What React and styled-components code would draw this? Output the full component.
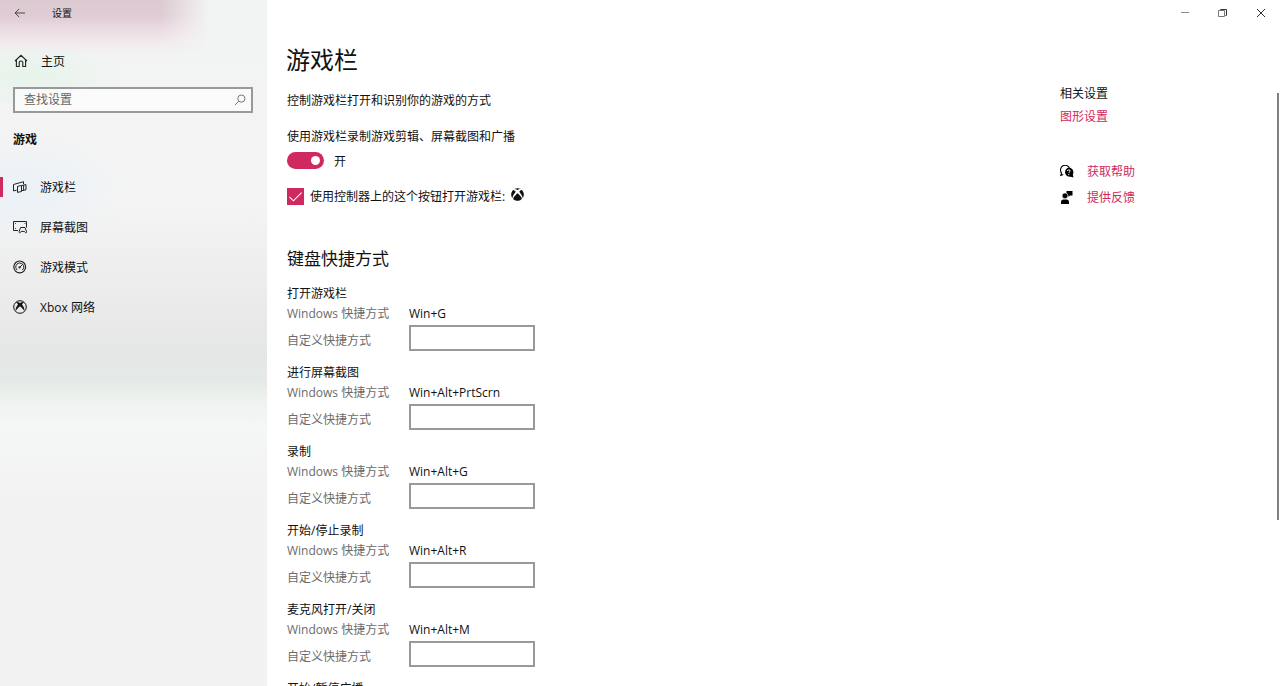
import { useState } from "react";
import styled, { createGlobalStyle } from "styled-components";
import { FaXbox } from "react-icons/fa";

const navItems = [
  { id: "bar", label: "游戏栏", Icon: GameBarIcon },
  { id: "capture", label: "屏幕截图", Icon: CaptureIcon },
  { id: "mode", label: "游戏模式", Icon: GameModeIcon },
  { id: "xbox", label: "Xbox 网络", Icon: XboxNetworkIcon },
];

const shortcuts = [
  { id: "open", title: "打开游戏栏", keys: "Win+G" },
  { id: "screenshot", title: "进行屏幕截图", keys: "Win+Alt+PrtScrn" },
  { id: "record", title: "录制", keys: "Win+Alt+G" },
  { id: "toggle-record", title: "开始/停止录制", keys: "Win+Alt+R" },
  { id: "mic", title: "麦克风打开/关闭", keys: "Win+Alt+M" },
  { id: "broadcast", title: "开始/暂停广播", keys: "Win+Alt+B" },
];

const App = () => {
  const [active, setActive] = useState("bar");
  const [recording, setRecording] = useState(true);
  const [controller, setController] = useState(true);

  return (
    <>
      <GlobalStyle />
      <Window>
        <Sidebar>
          <AppBar>
            <BackButton type="button" aria-label="返回">
              <BackIcon />
            </BackButton>
            <span>设置</span>
          </AppBar>
          <HomeLink href="#home">
            <HomeIcon />
            <IconLabel>主页</IconLabel>
          </HomeLink>
          <SearchBox>
            <input type="search" placeholder="查找设置" aria-label="查找设置" />
            <SearchIcon />
          </SearchBox>
          <Category>游戏</Category>
          <nav>
            {navItems.map(({ id, label, Icon }) => (
              <NavItem
                key={id}
                href={"#" + id}
                $active={active === id}
                onClick={() => setActive(id)}
              >
                <Icon />
                <IconLabel>{label}</IconLabel>
              </NavItem>
            ))}
          </nav>
        </Sidebar>

        <Main>
          <Controls>
            <ControlButton type="button" aria-label="最小化">
              <MinimizeIcon />
            </ControlButton>
            <ControlButton type="button" aria-label="还原">
              <RestoreIcon />
            </ControlButton>
            <ControlButton type="button" aria-label="关闭">
              <CloseIcon />
            </ControlButton>
          </Controls>
          <Title>游戏栏</Title>

          <Body>
            <Settings>
              <Text>控制游戏栏打开和识别你的游戏的方式</Text>
              <SwitchLabel htmlFor="recording">
                使用游戏栏录制游戏剪辑、屏幕截图和广播
              </SwitchLabel>
              <SwitchRow>
                <Switch
                  id="recording"
                  type="checkbox"
                  role="switch"
                  checked={recording}
                  onChange={(e) => setRecording(e.target.checked)}
                />
                <IconLabel>{recording ? "开" : "关"}</IconLabel>
              </SwitchRow>
              <CheckRow>
                <CheckBox>
                  <input
                    type="checkbox"
                    checked={controller}
                    onChange={(e) => setController(e.target.checked)}
                  />
                  {controller && <CheckIcon />}
                </CheckBox>
                <span>使用控制器上的这个按钮打开游戏栏:</span>
                <ControllerGlyph size={13} />
              </CheckRow>

              <SectionTitle>键盘快捷方式</SectionTitle>
              <ShortcutList>
                {shortcuts.map(({ id, title, keys }) => (
                  <Shortcut key={id}>
                    <h3>{title}</h3>
                    <ShortcutRow>
                      <span>Windows 快捷方式</span>
                      <kbd>{keys}</kbd>
                    </ShortcutRow>
                    <ShortcutRow>
                      <label htmlFor={id}>自定义快捷方式</label>
                      <input id={id} type="text" />
                    </ShortcutRow>
                  </Shortcut>
                ))}
              </ShortcutList>
            </Settings>

            <Related>
              <Text as="h2">相关设置</Text>
              <Link href="#graphics">图形设置</Link>
              <Support>
                <HelpRow>
                  <HelpIcon />
                  <Link href="#help">获取帮助</Link>
                </HelpRow>
                <HelpRow>
                  <FeedbackIcon />
                  <Link href="#feedback">提供反馈</Link>
                </HelpRow>
              </Support>
            </Related>

            <ScrollTrack>
              <ScrollThumb />
            </ScrollTrack>
          </Body>
        </Main>
      </Window>
    </>
  );
};

export default App;

function BackIcon() {
  return (
    <svg width="12" height="12" viewBox="0 0 12 12" fill="none" stroke="#444">
      <path d="M11 6H1M5.2 2L1 6l4.2 4" />
    </svg>
  );
}

function HomeIcon() {
  return (
    <svg width="14" height="14" viewBox="0 0 14 14" fill="none" stroke="#222" strokeWidth="1.1">
      <path d="M1 7L7 1.3 13 7M2.4 5.8v6.7h2.8V8.6q0-1.6 1.8-1.6t1.8 1.6v3.9h2.8V5.8" />
    </svg>
  );
}

function SearchIcon() {
  return (
    <svg width="12" height="12" viewBox="0 0 12 12" fill="none" stroke="#777">
      <circle cx="7.4" cy="4.6" r="3.6" />
      <path d="M4.8 7.2L1 11" />
    </svg>
  );
}

function GameBarIcon() {
  return (
    <svg width="14" height="14" viewBox="0 0 14 14" fill="none" stroke="#222">
      <path d="M3.6 10.2l-3.1.7V4.5L10.5 1.7V4" />
      <path d="M4.5 6.4l4-.9v6l-4 .9zM8.5 5.5l4.5-.9v5.2l-4.5.9M10.6 5.1v5.2" />
    </svg>
  );
}

function CaptureIcon() {
  return (
    <svg width="14" height="14" viewBox="0 0 14 14" fill="none" stroke="#222">
      <path d="M5 10.5H.5v-9h13v6" />
      <path d="M2 3.5h1M2 8.5h1M11.5 3.5h1" strokeWidth=".8" />
      <path d="M7.6 7.5H12l1.6 4.3c.2 1-1 1.4-1.6.5l-.6-.9H8.2l-.6.9c-.6.9-1.8.5-1.6-.5z" />
    </svg>
  );
}

function GameModeIcon() {
  return (
    <svg width="14" height="14" viewBox="0 0 14 14" fill="none" stroke="#222">
      <circle cx="6.7" cy="6.9" r="5.9" strokeWidth="1.2" />
      <path d="M4.2 10.1A4 4 0 1 1 9.3 10.1" />
      <path d="M9.6 4.3L6.7 7.3" />
      <circle cx="6.6" cy="7.4" r="1.1" fill="#222" stroke="none" />
    </svg>
  );
}

function XboxNetworkIcon() {
  return (
    <svg width="14" height="14" viewBox="0 0 14 14" fill="#111">
      <circle cx="7" cy="7" r="6.3" fill="none" stroke="#111" />
      <path d="M3 2Q5.2 1.7 7 2.9 8.8 1.7 11 2 10.4 3 9 4.2 11.6 7.5 11.5 11 9.5 8 7 6.2 4.5 8 2.5 11 2.4 7.5 5 4.2 3.6 3 3 2z" />
    </svg>
  );
}

function MinimizeIcon() {
  return (
    <svg width="10" height="10" viewBox="0 0 10 10" stroke="#888">
      <path d="M1 4.5h8" />
    </svg>
  );
}

function RestoreIcon() {
  return (
    <svg width="10" height="10" viewBox="0 0 10 10" fill="none" stroke="#333">
      <path d="M2.5 2.5v-1h6v6h-1" />
      <path d="M.5 2.5h6v6h-6z" stroke="#777" />
    </svg>
  );
}

function CloseIcon() {
  return (
    <svg width="10" height="10" viewBox="0 0 10 10" stroke="#333">
      <path d="M1 1l8 8M9 1L1 9" />
    </svg>
  );
}

function CheckIcon() {
  return (
    <svg width="17" height="17" viewBox="0 0 17 17" fill="none" stroke="#fff" strokeWidth="1.1">
      <path d="M2.4 8.8l4 4L14.6 4.6" />
    </svg>
  );
}

function HelpIcon() {
  return (
    <svg width="14" height="14" viewBox="0 0 14 14" fill="none">
      <path
        d="M3.2 9.4L.8 10.3l.7-2.4A4.7 4.7 0 1 1 9.6 3.4"
        stroke="#000"
        strokeWidth="1.1"
      />
      <path d="M8.8 2.6a4.6 4.6 0 0 1 4 6.8l.7 3.2-2.9-.9A4.6 4.6 0 1 1 8.8 2.6z" fill="#000" />
      <path d="M7.5 6q0-1.2 1.3-1.2T10.1 6q0 .7-.7 1.1-.6.3-.6 1" stroke="#fff" />
      <path d="M8.8 9v1.1" stroke="#fff" />
    </svg>
  );
}

function FeedbackIcon() {
  return (
    <svg width="14" height="14" viewBox="0 0 14 14" fill="#000">
      <path d="M6.5 0H12.5v4.5H10L8.4 6.1V4.5H6.5z" />
      <circle cx="5" cy="4.8" r="2.9" stroke="#fff" strokeWidth=".6" />
      <path d="M1 12.9v-1.6Q1 8.5 3.6 8.5h2.8Q9 8.5 9 11.3v1.6z" />
    </svg>
  );
}

const accent = "#ce2a60";

const GlobalStyle = createGlobalStyle`
  * {
    box-sizing: border-box;
  }

  body {
    margin: 0;
    background-color: white;
    color: #111;
    font-family: "Open Sans", "Noto Sans CJK SC", sans-serif;
    font-size: 12px;
    line-height: 20px;
  }

  h1, h2, h3, p {
    margin: 0;
    font-weight: 400;
  }

  input, button, kbd {
    font: inherit;
    color: inherit;
  }

  svg {
    display: block;
    flex: none;
  }
`;

const Window = styled.div`
  display: flex;
  height: 100vh;
  overflow: hidden;
`;

const Sidebar = styled.aside`
  flex: none;
  width: 267px;
  background:
    linear-gradient(to right, transparent 160px, #f2f3f3 208px) 0 0 / 100% 54px no-repeat,
    linear-gradient(#dccad1, #dfccd4 16px, #ecdce3 30px, #f1eaed 42px, transparent 54px) 0 0 / 100% 54px no-repeat,
    radial-gradient(ellipse 90px 36px at 30px 74px, #e6f4ea, transparent) no-repeat,
    radial-gradient(ellipse 110px 60px at 20px 190px, #eaf1f8, transparent) no-repeat,
    linear-gradient(
      #f2f3f3,
      #f4f4f4 200px,
      #ededed 280px,
      #e5e6e6 350px,
      #e4e9e6 378px,
      #edf2ef 400px,
      #f5f6f6 425px,
      #f2f2f2 500px
    );
`;

const AppBar = styled.div`
  display: flex;
  align-items: center;
  height: 26px;
  font-size: 10px;
`;

const BackButton = styled.button`
  display: grid;
  place-items: center;
  width: 40px;
  height: 26px;
  margin-right: 12px;
  padding: 0;
  border: none;
  background: none;
`;

// glyphs sit slightly above the text they label
const IconLabel = styled.span`
  padding-top: 2px;
`;

const HomeLink = styled.a`
  display: flex;
  align-items: center;
  gap: 13px;
  height: 40px;
  margin-top: 15px;
  padding-left: 14px;
  color: inherit;
  text-decoration: none;
`;

const SearchBox = styled.div`
  display: flex;
  align-items: center;
  height: 26px;
  margin: 6px 14px 0 13px;
  padding: 0 5px 0 9px;
  border: 2px solid #999;
  background-color: rgba(255, 255, 255, 0.6);

  input {
    flex: 1;
    min-width: 0;
    padding: 0;
    border: none;
    outline: none;
    background: none;
  }

  input::placeholder {
    color: #666;
  }
`;

const Category = styled.h2`
  margin: 17px 13px;
  font-size: 12px;
  font-weight: 700;
`;

const NavItem = styled.a`
  display: flex;
  align-items: center;
  gap: 13px;
  height: 40px;
  padding-left: 10px;
  color: inherit;
  text-decoration: none;

  &::before {
    content: "";
    width: 3px;
    height: 20px;
    margin: 0 -13px 0 -10px;
    background-color: ${(p) => (p.$active ? accent : "transparent")};
  }

  svg {
    margin-left: 10px;
  }
`;

const Main = styled.main`
  display: flex;
  flex: 1;
  flex-direction: column;
  min-width: 0;
`;

const Controls = styled.div`
  display: flex;
  justify-content: flex-end;
`;

const ControlButton = styled.button`
  display: grid;
  place-items: center;
  width: 38px;
  height: 26px;
  padding: 0;
  border: none;
  background: none;

  &:hover {
    background-color: #e5e5e5;
  }
`;

const Title = styled.h1`
  margin: 18px 0 0 19px;
  font-size: 24px;
  line-height: 32px;
`;

const Body = styled.div`
  display: flex;
  flex: 1;
  min-height: 0;
  overflow: hidden;
`;

const Settings = styled.section`
  flex: 1;
  padding: 15px 20px 20px;
`;

const Text = styled.p`
  font-size: 12px;
`;

const SwitchLabel = styled.label`
  display: block;
  margin-top: 16px;
`;

const SwitchRow = styled.div`
  display: flex;
  align-items: center;
  gap: 10px;
  height: 17px;
  margin-top: 5px;
`;

const Switch = styled.input`
  display: flex;
  align-items: center;
  appearance: none;
  width: 37px;
  height: 17px;
  margin: 0;
  padding: 0 4px;
  border-radius: 9px;
  background-color: #999;

  &::before {
    content: "";
    width: 9px;
    height: 9px;
    border-radius: 50%;
    background-color: white;
  }

  &:checked {
    justify-content: flex-end;
    background-color: ${accent};
  }
`;

const CheckRow = styled.label`
  display: flex;
  align-items: center;
  gap: 6px;
  height: 17px;
  margin-top: 19px;
`;

const CheckBox = styled.span`
  display: grid;

  input,
  svg {
    grid-area: 1 / 1;
  }

  input {
    appearance: none;
    width: 17px;
    height: 17px;
    margin: 0;
    border: 2px solid #666;
  }

  input:checked {
    border-color: ${accent};
    background-color: ${accent};
  }

  svg {
    z-index: 1;
    pointer-events: none;
  }
`;

const ControllerGlyph = styled(FaXbox)`
  align-self: flex-start;
`;

const SectionTitle = styled.h2`
  margin-top: 42px;
  font-size: 17px;
  line-height: 24px;
`;

const ShortcutList = styled.div`
  display: flex;
  flex-direction: column;
  gap: 12px;
  margin-top: 13px;
`;

const Shortcut = styled.div`
  display: flex;
  flex-direction: column;

  h3 {
    font-size: 12px;
  }
`;

const ShortcutRow = styled.div`
  display: grid;
  grid-template-columns: 122px 126px;
  align-items: end;

  & + & {
    margin-top: 1px;
  }

  span,
  label {
    color: #6b6b6b;
  }

  input {
    width: 100%;
    height: 26px;
    padding: 0 6px;
    border: 2px solid #999;
    background-color: white;
  }
`;

const Related = styled.aside`
  flex: none;
  width: 216px;
  padding-top: 8px;
`;

const Link = styled.a`
  display: inline-block;
  color: ${accent};
  text-decoration: none;

  ${Text} + & {
    margin-top: 3px;
  }
`;

const Support = styled.div`
  display: flex;
  flex-direction: column;
  gap: 6px;
  margin-top: 35px;
`;

const HelpRow = styled.div`
  display: flex;
  align-items: center;
  gap: 13px;
`;

const ScrollTrack = styled.div`
  flex: none;
  width: 4px;
  padding: 17px 1px 0;
`;

const ScrollThumb = styled.div`
  width: 2px;
  height: 72%;
  background-color: #808080;
`;
